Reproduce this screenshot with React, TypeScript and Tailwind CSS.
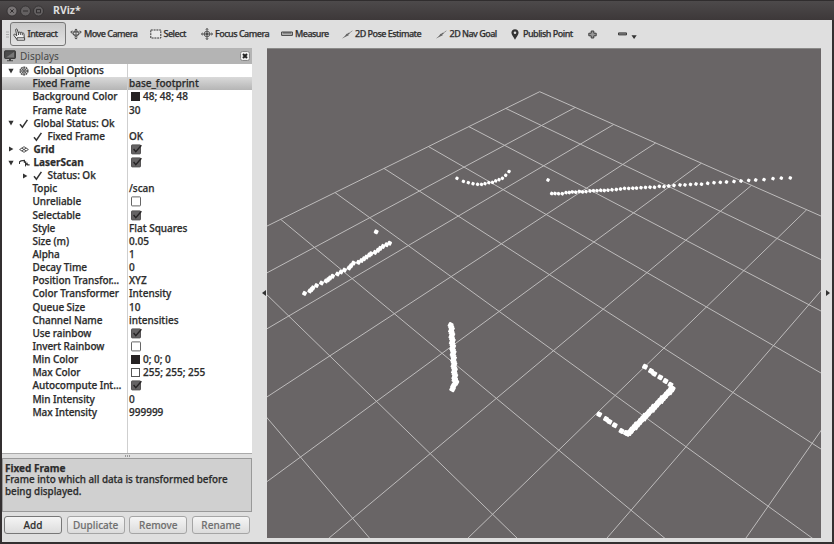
import type { ReactNode } from "react";

type IconName = "hand" | "move" | "select" | "focus" | "ruler" | "arrow" | "pin";

function ToolIcon({ name }: { name: IconName }) {
  switch (name) {
    case "hand":
      return (
        <svg width="13" height="13" viewBox="0 0 13 13" fill="#f4f4f4" stroke="#333" strokeWidth="0.9" className="shrink-0">
          <path d="M4 11.5L1 7.6C.2 6.6 1.2 5.8 2.2 6.5L3.8 7.8 2.7 2C2.5.7 4 .5 4.3 1.7L5.3 5C5.3 3.7 7 3.7 7.2 4.8C7.6 3.8 9 4.1 9.2 5.2C9.7 4.5 11 5 11 6.1L11.2 9.2 10.4 11.5" />
          <path d="M5.3 5l.3 2M7.2 4.8l.3 2M9.2 5.2l.1 2" />
          <path d="M4 9.8h7.6v2.4H4z" />
        </svg>
      );
    case "move":
      return (
        <svg width="12" height="12" viewBox="0 0 12 12" fill="none" stroke="#4a4a4a" strokeWidth="0.9" className="shrink-0">
          <path d="M6 1v10M.8 4h10.4M4.6 2.2L6 1l1.4 1.2M4.6 9.8L6 11l1.4-1.2M2.2 2.6L.8 4l1.6 1.8M9.8 2.6L11.2 4 9.6 5.8M2.4 5.8c1.8 1.8 5.4 1.8 7.2 0" />
          <ellipse cx="6" cy="5.6" rx="2.5" ry="2.8" />
        </svg>
      );
    case "select":
      return (
        <svg width="12" height="10" viewBox="0 0 12 10" fill="#e9e9e9" stroke="#333" strokeWidth="1" className="shrink-0">
          <path strokeDasharray="2 0.8" d="M.8 1h10v8H.8z" />
        </svg>
      );
    case "focus":
      return (
        <svg width="12" height="12" viewBox="0 0 12 12" fill="none" stroke="#4a4a4a" strokeWidth="0.9" className="shrink-0">
          <circle cx="6" cy="6" r="2.8" />
          <circle cx="6" cy="6" r="1" fill="#444" />
          <path d="M6 .3v11.4M.3 6h11.4M4.8 1.8L6 .5l1.2 1.3M4.8 10.2L6 11.5l1.2-1.3M1.8 4.8L.5 6l1.3 1.2M10.2 4.8L11.5 6l-1.3 1.2" />
        </svg>
      );
    case "ruler":
      return (
        <svg width="12" height="6" viewBox="0 0 12 6" fill="#bbb" stroke="#444" strokeWidth="1" className="shrink-0">
          <path d="M.6 1h10.8v3.4H.6zM3 1v1.8M5 1v1.8M7 1v1.8M9 1v1.8" />
        </svg>
      );
    case "arrow":
      return (
        <svg width="11" height="9" viewBox="0 0 11 9" fill="none" className="shrink-0">
          <path d="M.6 8.2L10.4.8" stroke="#999" strokeWidth="1" />
          <path d="M1.8 7.4L5 3.5 6.8 5.2z" fill="#666" />
          <path d="M4 5.6L7.4 3" stroke="#666" strokeWidth="1.2" />
        </svg>
      );
    case "pin":
      return (
        <svg width="8" height="11" viewBox="0 0 8 11" className="shrink-0">
          <path fillRule="evenodd" fill="#333" d="M4 .2C1.8.2.4 1.8.4 3.7.4 6 2.6 7.4 4 10.8 5.4 7.4 7.6 6 7.6 3.7 7.6 1.8 6.2.2 4 .2zM4 2.5a1.3 1.3 0 1 1 0 2.6 1.3 1.3 0 0 1 0-2.6z" />
        </svg>
      );
  }
}

function Tool({ icon, label, className }: { icon: IconName; label: string; className: string }) {
  return (
    <div className={`flex shrink-0 items-center whitespace-nowrap ${className}`}>
      <ToolIcon name={icon} />
      <span>{label}</span>
    </div>
  );
}

function Toolbar() {
  return (
    <div className="flex h-7 shrink-0 items-center text-[9px] font-medium tracking-[-0.52px] text-[#303030] [-webkit-text-stroke:0.25px]">
      <svg className="ml-1 shrink-0" width="3" height="7" viewBox="0 0 3 7">
        <path d="M0 1h3M0 3.5h3M0 6h3" stroke="#aaa" strokeWidth="1" />
      </svg>
      <div className="ml-px flex h-6 w-[56px] shrink-0 items-center gap-[1.5px] rounded-[3px] border border-[#777] bg-linear-to-b from-[#c9c9c9] to-[#e3e3e3] pl-[2px]">
        <ToolIcon name="hand" />
        <span>Interact</span>
      </div>
      <Tool icon="move" label="Move Camera" className="ml-[4px] w-[80px] gap-[2px]" />
      <Tool icon="select" label="Select" className="w-[51px] gap-[1.5px]" />
      <Tool icon="focus" label="Focus Camera" className="w-[80px] gap-[2px]" />
      <Tool icon="ruler" label="Measure" className="w-[61px] gap-[2px]" />
      <Tool icon="arrow" label="2D Pose Estimate" className="w-[94px] gap-[2px]" />
      <Tool icon="arrow" label="2D Nav Goal" className="w-[75px] gap-[2.5px]" />
      <Tool icon="pin" label="Publish Point" className="w-[77px] gap-[4px]" />
      <svg className="shrink-0" width="9" height="9" viewBox="0 0 9 9">
        <path d="M3.2 1h2.6v2.2h2.4v2.6H5.8V8H3.2V5.8H.8V3.2h2.4z" fill="#999" stroke="#3d3d3d" />
      </svg>
      <svg className="ml-[21px] shrink-0" width="19" height="9" viewBox="0 0 19 9">
        <path d="M.5 2.9h8v2h-8z" fill="#888" stroke="#3d3d3d" />
        <path d="M13.5 5.3h5.2L16.1 9z" fill="#333" />
      </svg>
    </div>
  );
}

function Check() {
  return (
    <svg width="10" height="11" viewBox="0 0 10 11" fill="none" stroke="#333" className="shrink-0">
      <path d="M1 6.2L3.4 9.2 8.4 1.8" strokeWidth="1.5" />
    </svg>
  );
}

function Gear() {
  return (
    <svg width="10" height="10" viewBox="0 0 10 10" fill="none" stroke="#555" className="shrink-0">
      <circle cx="5" cy="5" r="3.8" strokeWidth="1.6" strokeDasharray="1.8 .6" />
      <circle cx="5" cy="5" r="2.2" />
      <path d="M5 1v8M1 5h8M2.2 2.2l5.6 5.6M7.8 2.2L2.2 7.8" strokeWidth=".7" />
    </svg>
  );
}

function GridIcon() {
  return (
    <svg width="10" height="7" viewBox="0 0 10 7" fill="none" stroke="#444" className="shrink-0">
      <path d="M.6 3.5L5 .7l4.4 2.8L5 6.3zM2.8 2.1l4.4 2.8M7.2 2.1L2.8 4.9" strokeWidth=".9" />
    </svg>
  );
}

function ScanIcon() {
  return (
    <svg width="11" height="9" viewBox="0 0 11 9" fill="none" stroke="#333" className="shrink-0">
      <path d="M.4 6V4L2 2.8 5.4 2.4v1.8L6.6 4v3.2L8 5.4l.6 1.4h2" strokeWidth="1.2" />
    </svg>
  );
}

function Twisty({ open }: { open: boolean }) {
  return (
    <svg width="6" height="6" viewBox="0 0 6 6" fill="#333" className="shrink-0">
      {open ? <path d="M.4.8h5.2L3 5.4z" /> : <path d="M1 .4v5.2L5.4 3z" />}
    </svg>
  );
}

function Box({ on }: { on: boolean }) {
  return (
    <svg width="12" height="11" viewBox="0 0 12 11" className="ml-[2px] shrink-0">
      <rect x=".5" y=".9" width="9" height="9" rx="0.6" fill={on ? "#656364" : "#fff"} stroke={on ? "#565455" : "#666"} />
      {on && <path d="M2.6 5l2.2 2.6L10.4 1.2" fill="none" stroke="#262425" strokeWidth="1.4" />}
    </svg>
  );
}

function Swatch({ dark, text }: { dark: boolean; text: string }) {
  return (
    <span className="flex items-center gap-[3px] pl-[2px]">
      <i className={`size-[9px] border ${dark ? "border-[#262223] bg-[#262223]" : "border-[#555] bg-white"}`} />
      {text}
    </span>
  );
}

interface Property {
  label: string;
  value?: ReactNode;
  level?: "root" | "child" | "nested";
  open?: boolean;
  icon?: ReactNode;
  bold?: boolean;
  selected?: boolean;
}

const properties: Property[] = [
  { label: "Global Options", level: "root", open: true, icon: <Gear /> },
  { label: "Fixed Frame", value: "base_footprint", selected: true },
  { label: "Background Color", value: <Swatch dark text="48; 48; 48" /> },
  { label: "Frame Rate", value: "30" },
  { label: "Global Status: Ok", level: "root", open: true, icon: <Check /> },
  { label: "Fixed Frame", value: "OK", level: "nested", icon: <Check /> },
  { label: "Grid", value: <Box on />, level: "root", open: false, icon: <GridIcon />, bold: true },
  { label: "LaserScan", value: <Box on />, level: "root", open: true, icon: <ScanIcon />, bold: true },
  { label: "Status: Ok", level: "nested", open: false, icon: <Check /> },
  { label: "Topic", value: "/scan" },
  { label: "Unreliable", value: <Box on={false} /> },
  { label: "Selectable", value: <Box on /> },
  { label: "Style", value: "Flat Squares" },
  { label: "Size (m)", value: "0.05" },
  { label: "Alpha", value: "1" },
  { label: "Decay Time", value: "0" },
  { label: "Position Transfor…", value: "XYZ" },
  { label: "Color Transformer", value: "Intensity" },
  { label: "Queue Size", value: "10" },
  { label: "Channel Name", value: "intensities" },
  { label: "Use rainbow", value: <Box on /> },
  { label: "Invert Rainbow", value: <Box on={false} /> },
  { label: "Min Color", value: <Swatch dark text="0; 0; 0" /> },
  { label: "Max Color", value: <Swatch dark={false} text="255; 255; 255" /> },
  { label: "Autocompute Int…", value: <Box on /> },
  { label: "Min Intensity", value: "0" },
  { label: "Max Intensity", value: "999999" },
];

function Row({ label, value, level = "child", open, icon, bold, selected }: Property) {
  const inset = level === "root" ? "pl-[6px]" : level === "nested" ? "pl-[20px]" : "pl-[30.5px]";
  return (
    <div className={`flex h-[13.15px] whitespace-nowrap ${selected ? "bg-linear-to-b from-[#dadada] to-[#b5b5b5]" : ""}`}>
      <div className={`flex w-[126px] shrink-0 items-center border-r border-[#cfcfcf] ${inset}`}>
        {level !== "child" && (
          <>
            <span className="flex w-[11px] shrink-0">{open !== undefined && <Twisty open={open} />}</span>
            <span className="flex w-[14.5px] shrink-0">{icon}</span>
          </>
        )}
        <span className={bold ? "font-bold" : "tracking-[-0.06px]"}>{label}</span>
      </div>
      <div className="flex items-center pl-px">{value}</div>
    </div>
  );
}

function PanelButton({ label, enabled = false }: { label: string; enabled?: boolean }) {
  return (
    <button
      className={`flex h-[18px] w-[58px] items-center justify-center rounded-[3px] border bg-linear-to-b from-[#f5f5f5] to-[#dcdcdc] text-[10px] font-medium [-webkit-text-stroke:0.15px] ${
        enabled ? "border-[#777] text-[#303030]" : "border-[#a5a5a5] text-[#707070]"
      }`}
    >
      {label}
    </button>
  );
}

function DisplaysPanel() {
  return (
    <div className="flex w-[250px] shrink-0 flex-col">
      <div className="flex h-[16px] shrink-0 items-center bg-[#b4b4b4] pr-[2px] pl-[2px] text-[10px] text-[#484848]">
        <svg width="12" height="12" viewBox="0 0 12 12">
          <rect x=".6" y=".8" width="10.8" height="7.6" rx=".6" fill="#4c4c4c" stroke="#333" />
          <path d="M2 7.4L10 2v5.4z" fill="#777" />
          <path d="M5 8.6h2v1.6h2v1H3v-1h2z" fill="#444" />
        </svg>
        <span className="ml-[4px] flex-1">Displays</span>
        <svg width="10" height="10" viewBox="0 0 10 10">
          <rect x=".5" y=".5" width="9" height="9" rx="2" fill="#eee" stroke="#888" />
          <path d="M3 3l4 4M7 3L3 7" stroke="#222" strokeWidth="2" />
        </svg>
      </div>
      <div className="flex h-[390px] shrink-0 flex-col border-b border-[#aaa] bg-white text-[10px] font-medium text-[#2c2c2c] [-webkit-text-stroke:0.25px]">
        {properties.map((property, index) => (
          <Row key={index} {...property} />
        ))}
        <div className="w-[126px] flex-1 border-r border-[#cfcfcf]" />
      </div>
      <div className="flex h-1 shrink-0 items-center justify-center gap-px">
        <i className="h-[2px] w-px bg-[#999]" />
        <i className="h-[2px] w-px bg-[#999]" />
        <i className="h-[2px] w-px bg-[#999]" />
      </div>
      <div className="flex h-[54px] shrink-0 flex-col gap-[0.5px] border border-[#999] bg-[#d0d0d0] px-[2px] pt-[2.5px] text-[9.8px] leading-[12px] font-medium text-[#2c2c2c] [-webkit-text-stroke:0.25px]">
        <p className="text-[10px] font-bold">Fixed Frame</p>
        <p className="w-[240px] text-[9.8px]">Frame into which all data is transformed before being displayed.</p>
      </div>
      <div className="mt-[4px] flex justify-between pr-[2px] pl-[2px]">
        <PanelButton label="Add" enabled />
        <PanelButton label="Duplicate" />
        <PanelButton label="Remove" />
        <PanelButton label="Rename" />
      </div>
    </div>
  );
}

// Perspective projection of a ground-plane cell corner into window coordinates.
function project(i: number, j: number) {
  const w = 1 - 0.0387 * i - 0.04113 * j;
  return `${((13.28 * i - 54.715 * j + 539.7) / w).toFixed(2)} ${((11.555 * i + 12.25 * j + 91.7) / w).toFixed(2)}`;
}

const steps = Array.from({ length: 11 }, (_, n) => n);
const gridPath = steps
  .map((n) => `M${project(n, 0)}L${project(n, 10)}M${project(0, n)}L${project(10, n)}`)
  .join("");

type Point = [number, number];

const arc: Point[] = [
  [457, 178.3], [463.4, 181.4], [468.3, 182.6], [473, 183.7], [477.6, 184.3], [481.5, 184.4], [485, 183.6], [488.8, 182.6],
  [492.5, 182.4], [495.7, 180.9], [499, 179.7], [502.4, 178.3], [505.7, 175.3], [509, 171.5],
];

const wall: Point[] = [
  [548, 180], [551.7, 193.5], [555, 193.5], [558.5, 193.7], [562.3, 193.7], [566, 192.6], [569.3, 192.5], [572.3, 191.9], [575.7, 192.2],
  [579.3, 191.4], [582.5, 191.9], [586, 191.6], [590, 191], [593.5, 190.7], [597, 190.7], [600.7, 190.3], [604.3, 190.5], [608, 190.2],
  [612, 189.8], [616.3, 189.5], [620.5, 189], [624.5, 188.3], [628.7, 188.4], [632.8, 188.2], [636.5, 188.1], [641, 187.7], [645.5, 187.4],
  [650, 187.2], [654.5, 187.3], [659.3, 186.3], [664, 186.6], [668.7, 186], [674, 185.5], [680, 184.9], [685, 184.9], [690.5, 184.4],
  [696, 184], [701.5, 184.2], [707.7, 183.3], [714, 182.7], [720.3, 182.3], [726.5, 182], [734, 181.5], [741, 181], [748.7, 180.4],
  [755.7, 180], [764, 179.6], [773, 178.6], [781.3, 178.1], [790.3, 177.9],
];

const diagonal: Point[] = [
  [376.2, 231.8], [304.5, 293.4], [309.8, 291], [311.5, 289.5], [313, 287.8], [316.5, 285.5], [321.5, 283], [326, 281], [328, 279.7], [330, 278],
  [332.5, 276.2], [337.5, 274], [341, 272], [344.5, 270], [349, 268], [351, 265.7], [353.5, 263], [358.5, 262.3], [361.5, 260.5], [364, 258.7],
  [366.5, 257], [369.3, 255], [371, 253.7], [375, 252.4], [378, 250.3], [380.3, 248.3], [383, 246.4], [386.5, 244.7], [389.5, 243.2],
];

const bracket: Point[] = [
  [645, 366.7], [651, 371], [654.3, 373.8], [660.2, 377.3], [665.5, 381], [670.5, 384.7], [672, 388.2],
  [599.2, 414.3], [606, 419], [609.5, 421.7], [614.7, 425.2], [621.5, 431], [626, 433],
];

const pillar: Point[] = Array.from({ length: 30 }, (_, n): Point => [450.6 + n * 0.14 + (n % 3) * 0.5, 325 + n * 1.95]);
const edge: Point[] = Array.from({ length: 32 }, (_, n): Point => [627.5 + n * 1.43 + (n % 3) * 0.5, 433.5 - n * 1.46 + (n % 2) * 0.7]);

function Dots({ points, size }: { points: Point[]; size: number }) {
  return (
    <>
      {points.map(([x, y], index) => (
        <rect key={index} x={x - size / 2} y={y - size / 2} width={size} height={size} rx="1" transform={`rotate(28 ${x} ${y})`} />
      ))}
    </>
  );
}

function Viewport() {
  return (
    <svg className="block shrink-0 bg-[#696566]" width="554" height="490" viewBox="267 48 554 490">
      <path d={gridPath} fill="none" stroke="#bebcbc" strokeWidth="1" />
      <g fill="#fff">
        <Dots points={arc} size={3.2} />
        <Dots points={wall} size={3.3} />
        <Dots points={diagonal} size={4.2} />
        <Dots points={bracket} size={5} />
        <Dots points={pillar} size={5} />
        <Dots points={[[454.8, 380], [456, 382.5], [453.5, 386], [452.5, 389]]} size={5.4} />
        <Dots points={edge} size={5.4} />
      </g>
      <path d="M267 48.5h554" stroke="#8a8a88" />
    </svg>
  );
}

function WindowControls() {
  return (
    <svg width="38" height="12" viewBox="0 0 38 12" fill="#787475" stroke="#302d2e" strokeWidth=".8">
      <circle cx="6" cy="6" r="5" />
      <circle cx="19.5" cy="6" r="5" fill="#636061" />
      <circle cx="32.5" cy="6" r="5" fill="#636061" />
      <path d="M4.3 4.3l3.4 3.4M7.7 4.3L4.3 7.7M17 6h5M30.5 4.4h4v3.4h-4z" fill="none" strokeWidth="1" />
    </svg>
  );
}

export default function App() {
  return (
    <div className="flex h-[544px] w-[834px] flex-col overflow-hidden bg-[#dfdfdf] font-['Noto_Sans',sans-serif]">
      <header className="flex h-5 shrink-0 items-center border-t border-[#302d2e] bg-linear-to-b from-[#4d4a4b] to-[#3d3839] pl-[6px]">
        <WindowControls />
        <span className="ml-[9px] text-[10.5px] font-bold text-[#dedede]">RViz*</span>
      </header>
      <div className="flex h-[524px] flex-col border-x-2 border-b-2 border-[#332f30]">
        <Toolbar />
        <div className="flex">
          <DisplaysPanel />
          <div className="flex h-[490px] w-[15px] shrink-0 items-center justify-end pr-[1px]">
            <svg width="4" height="6" viewBox="0 0 4 6">
              <path d="M4 0v6L0 3z" fill="#333" />
            </svg>
          </div>
          <Viewport />
          <div className="flex h-[490px] flex-1 items-center pl-[5px]">
            <svg width="4" height="6" viewBox="0 0 4 6">
              <path d="M0 0v6l4-3z" fill="#333" />
            </svg>
          </div>
        </div>
      </div>
    </div>
  );
}
